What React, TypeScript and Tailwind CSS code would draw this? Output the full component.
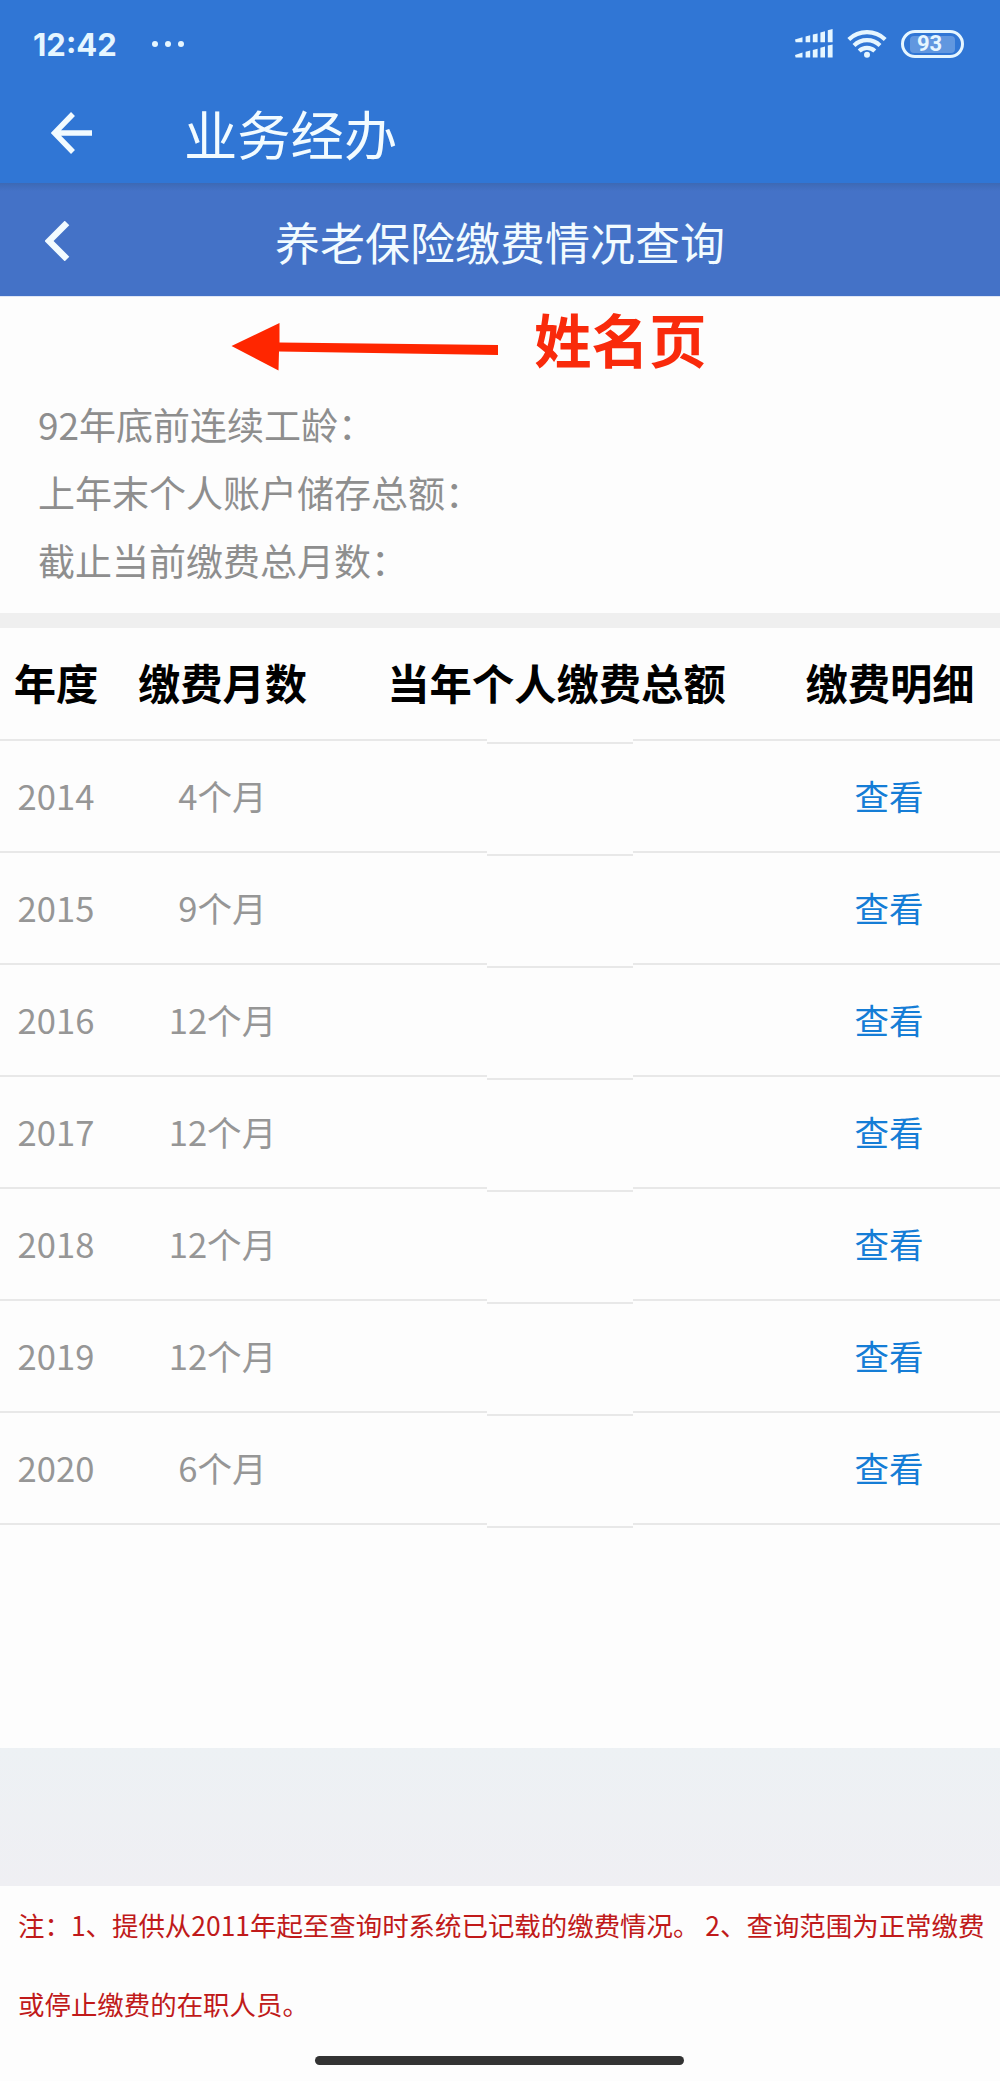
const rows = [
  { year: '2014', months: '4个月' },
  { year: '2015', months: '9个月' },
  { year: '2016', months: '12个月' },
  { year: '2017', months: '12个月' },
  { year: '2018', months: '12个月' },
  { year: '2019', months: '12个月' },
  { year: '2020', months: '6个月' },
];

const columns = 'grid grid-cols-[112px_221px_447px_220px]';

function SignalIcon() {
  return (
    <svg width="38" height="30" viewBox="0 0 38 30" fill="#e6f6ff">
      <path d="M0 10.6l7.5-2.4v5H.6zM10.600 7.400l4.600-1.200v7H10.600zM17.800 5.600l4.800-1.200v8.800h-4.800zM25.400 3.400l4.600-1.200v11h-4.600zM32.800 1.200l4.800-1.200v13.200h-4.800z" />
      <path d="M0 26l7.5-2.400v5H.6zM10.600 22.800l4.600-1.200v7H10.600zM17.800 21l4.800-1.200v8.800h-4.800zM25.400 18.800l4.600-1.200v11h-4.600zM32.800 16.600l4.800-1.200v13.200h-4.800z" />
    </svg>
  );
}

function WifiIcon() {
  return (
    <svg width="40" height="30" viewBox="0 0 40 30" fill="none" stroke="#e6f6ff" strokeWidth="4.2">
      <path d="M1.800 10.400a26.400 26.400 0 0 1 36.400 0" />
      <path d="M7 16.400a18.600 18.600 0 0 1 26 0" />
      <path d="M12.200 22a11.200 11.200 0 0 1 15.600 0" />
      <circle cx="20" cy="25.800" r="3" fill="#e6f6ff" stroke="none" />
    </svg>
  );
}

function StatusBar() {
  return (
    <div className="flex h-[88px] items-center pl-[33px] pr-[36px] text-[#e6f6ff]">
      <span className="w-[84px] whitespace-nowrap font-['Inter'] text-[31px] font-bold leading-none">12:42</span>
      <div className="ml-[35px] flex gap-[7px]">
        <span className="size-[6px] rounded-full bg-[#e6f6ff]" />
        <span className="size-[6px] rounded-full bg-[#e6f6ff]" />
        <span className="size-[6px] rounded-full bg-[#e6f6ff]" />
      </div>
      <div className="ml-auto flex items-center">
        <SignalIcon />
        <div className="ml-[14px]">
          <WifiIcon />
        </div>
        <div className="ml-[14px] flex h-[28px] w-[63px] items-center rounded-full border-3 border-[#e6f6ff] px-[6px]">
          <div className="flex h-[17px] w-full items-center rounded-[4px] bg-[#6197df] pl-[7px] font-['Roboto'] text-[22px] font-bold leading-none">
            93
          </div>
        </div>
      </div>
    </div>
  );
}

function Divider() {
  return (
    <div className="flex h-[2px]">
      <div className="w-[487px] bg-[#e8e8e8]" />
      <div className="h-[2px] w-[146px] translate-y-[3px] bg-[#e8e8e8]" />
      <div className="flex-1 bg-[#e8e8e8]" />
    </div>
  );
}

export default function App() {
  return (
    <div className="flex h-[2081px] w-[1000px] flex-col overflow-hidden bg-[#fdfdfd] font-['Noto_Sans_CJK_SC',sans-serif]" lang="zh-CN">
      <header className="h-[183px] shrink-0 bg-[#3076d5]">
        <StatusBar />
        <div className="flex h-[90px] items-center pl-[51px] text-[#f2fbff]">
          <svg width="42" height="42" viewBox="0 0 42 42" fill="none" stroke="#f2fbff" strokeWidth="5.5">
            <path d="M22 2L3.5 21L22 40M3.5 21H41" />
          </svg>
          <h1 className="ml-[91px] text-[53.300px] leading-none">业务经办</h1>
        </div>
      </header>

      <div className="relative flex h-[113px] shrink-0 items-center justify-center bg-gradient-to-b from-[#3d69b4] to-[#4472c7] to-[8px] text-[#f2fbff]">
        <svg className="absolute left-[45px] top-[38px]" width="25" height="40" viewBox="0 0 25 40" fill="none" stroke="#f2fbff" strokeWidth="6.5">
          <path d="M22 2L4 20L22 38" />
        </svg>
        <h2 className="pt-[4px] text-[45px] leading-none">养老保险缴费情况查询</h2>
      </div>

      <section className="flex h-[317px] shrink-0 flex-col border-t border-[#dfe6f6]">
        <div className="flex h-[93px] items-start pl-[231px]">
          <svg className="mt-[25px]" width="268" height="50" viewBox="0 0 268 50" fill="#ff2600">
            <path d="M0.500 24L48.500 1V20.500L267 23V33L48 29.500L47.500 48.500z" />
          </svg>
          <span className="ml-[35px] mt-[13px] text-[57.500px] font-bold leading-none text-[#f92a0b]">姓名页</span>
        </div>
        <div className="pl-[38px] text-[37px] leading-[68px] text-[#8e8e8e]">
          <p>92年底前连续工龄：</p>
          <p>上年末个人账户储存总额：</p>
          <p>截止当前缴费总月数：</p>
        </div>
      </section>

      <div className="h-[15px] shrink-0 bg-[#efefef]" />

      <section className="h-[1120px] shrink-0">
        <div className={`${columns} h-[111px] items-center pb-[3px] text-center text-[42.300px] font-bold leading-none text-black`}>
          <span>年度</span>
          <span>缴费月数</span>
          <span>当年个人缴费总额</span>
          <span>缴费明细</span>
        </div>
        <Divider />
        {rows.map((row) => (
          <div key={row.year}>
            <div className={`${columns} h-[110px] items-center pb-px text-center text-[34.600px] leading-none text-[#969696]`}>
              <span>{row.year}</span>
              <span>{row.months}</span>
              <span />
              <a className="-translate-x-px text-[#157dd6]">查看</a>
            </div>
            <Divider />
          </div>
        ))}
      </section>

      <div className="h-[138px] shrink-0 bg-gradient-to-b from-[#edf1f4] to-[#efeff3]" />

      <footer className="flex flex-1 flex-col pl-[18px]">
        <p className="-mt-px whitespace-nowrap text-[26.450px] leading-[79px] text-[#c01a1a]">
          注：1、提供从2011年起至查询时系统已记载的缴费情况。 2、查询范围为正常缴费
          <br />
          或停止缴费的在职人员。
        </p>
        <div className="ml-[297px] mt-[13px] h-[9px] w-[369px] rounded-full bg-[#333333]" />
      </footer>
    </div>
  );
}
